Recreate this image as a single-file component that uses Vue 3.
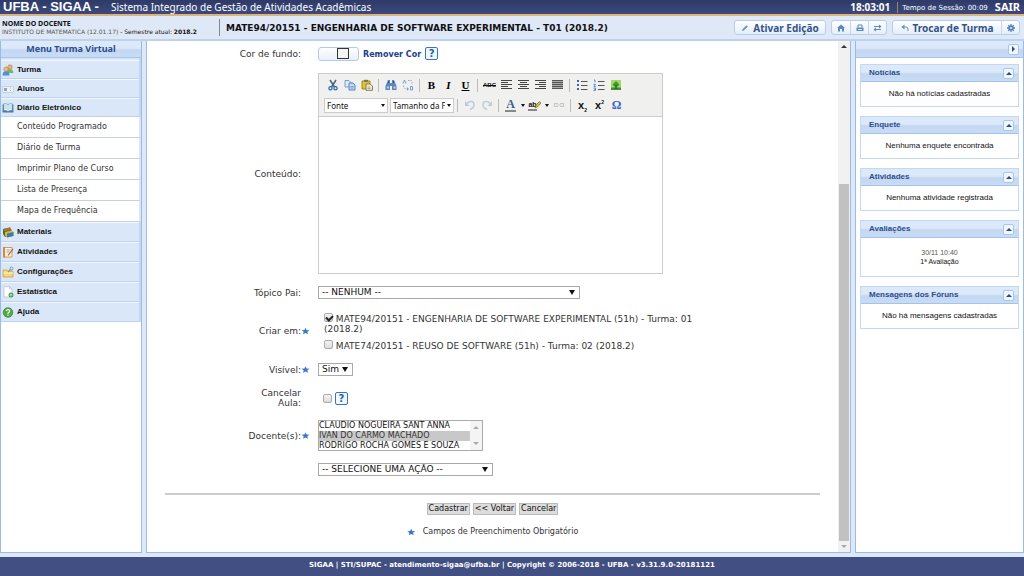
<script setup>
import { ref } from 'vue'

const mainItems = ['Turma', 'Alunos', 'Diário Eletrônico']
const subItems = ['Conteúdo Programado', 'Diário de Turma', 'Imprimir Plano de Curso', 'Lista de Presença', 'Mapa de Frequência']
const moreItems = ['Materiais', 'Atividades', 'Configurações', 'Estatística', 'Ajuda']
const cards = [
  { title: 'Notícias', text: 'Não há notícias cadastradas' },
  { title: 'Enquete', text: 'Nenhuma enquete encontrada' },
  { title: 'Atividades', text: 'Nenhuma atividade registrada' },
  { title: 'Avaliações', date: '30/11 10:40', text: '1ª Avaliação' },
  { title: 'Mensagens dos Fóruns', text: 'Não há mensagens cadastradas' }
]
const teachers = ['CLAUDIO NOGUEIRA SANT ANNA', 'IVAN DO CARMO MACHADO', 'RODRIGO ROCHA GOMES E SOUZA']
const chosen = ref(['IVAN DO CARMO MACHADO'])
const inT01 = ref(true)
const inT02 = ref(false)
const cancelled = ref(false)
const content = ref('')
</script>

<template>
  <div class="page">
    <header class="top">
      <strong class="brand">UFBA - SIGAA -</strong>
      <span class="system">Sistema Integrado de Gestão de Atividades Acadêmicas</span>
      <span class="clock">18:03:01</span>
      <span class="session">Tempo de Sessão: 00:09</span>
      <a class="exit" href="#">SAIR</a>
    </header>

    <div class="info">
      <div class="who">
        <strong>NOME DO DOCENTE</strong>
        <span class="dept">INSTITUTO DE MATEMATICA (12.01.17) <span class="sem">- Semestre atual: <b>2018.2</b></span></span>
      </div>
      <h1>MATE94/20151 - ENGENHARIA DE SOFTWARE EXPERIMENTAL - T01 (2018.2)</h1>
      <div class="actions">
        <button class="act edit" type="button">
          <svg width="8" height="8" viewBox="0 0 8 8"><path d="M1 7l.6-1.9L5.6 1.2 6.8 2.4 2.9 6.4z" fill="#6f8fb8" /></svg>
          Ativar Edição
        </button>
        <div class="group">
          <button class="act" type="button" aria-label="Início">
            <svg width="8" height="8" viewBox="0 0 8 8"><path d="M0 4l4-3.500L8 4H7v3.500H5V5H3v2.500H1V4z" fill="#5c88bd" /></svg>
          </button>
          <button class="act" type="button" aria-label="Imprimir">
            <svg width="8" height="8" viewBox="0 0 8 8"><path d="M2 3.500V1h4v2.500" fill="none" stroke="#5c88bd" /><path d="M.5 3.500h7V7h-7z" fill="#5c88bd" /><path d="M2 5h4v1H2z" fill="#dce9f8" /></svg>
          </button>
          <button class="act" type="button" aria-label="Alternar">
            <svg width="9" height="8" viewBox="0 0 9 8"><path d="M1 2.500h5M3 5.500h5" stroke="#5c88bd" /><path d="M6 .5l2.500 2L6 4.500zM3 3.500L.5 5.500l2.500 2z" fill="#5c88bd" /></svg>
          </button>
        </div>
        <div class="group">
          <button class="act switch" type="button">
            <svg width="8" height="8" viewBox="0 0 8 8"><path d="M1.500 3h3.500q2 0 2 2v2" fill="none" stroke="#6f8fb8" /><path d="M3.500.5v5L.3 3z" fill="#6f8fb8" /></svg>
            Trocar de Turma
          </button>
          <button class="act gear" type="button" aria-label="Configurar">
            <svg width="8" height="8" viewBox="0 0 8 8"><path d="M4 0v8M0 4h8M1.200 1.200l5.600 5.600M6.800 1.200L1.200 6.800" stroke="#4f7fba" stroke-width="1.300" /><circle cx="4" cy="4" r="2.500" fill="#4f7fba" /><circle cx="4" cy="4" r="1" fill="#e8f1fb" /></svg>
          </button>
        </div>
      </div>
    </div>

    <div class="body">
      <nav class="panel left">
        <h2 class="bar menu-title">Menu Turma Virtual</h2>
        <div class="items first">
          <a v-for="(m, i) in mainItems" :key="m" href="#" class="item">
            <svg v-if="i === 0" width="12" height="12" viewBox="0 0 12 12"><circle cx="8" cy="3" r="2.200" fill="#e8b878" stroke="#b07a30" stroke-width=".6" /><path d="M5 9q0-4 3-4t3.500 4z" fill="#74b860" /><circle cx="4" cy="5.200" r="2.200" fill="#f0c080" stroke="#c06a30" stroke-width=".6" /><path d="M.5 11.500q0-4.300 3.500-4.300t3.500 4.300z" fill="#4f8ddd" /></svg>
            <svg v-else-if="i === 1" width="12" height="12" viewBox="0 0 12 12"><path d="M.5 3.500h11v6H.5z" fill="#eef3f8" stroke="#c6d2e0" /><path d="M2 5h3v3H2z" fill="#8fa3bd" /><path d="M8 5h1M8 7.500h1" stroke="#9ab" /></svg>
            <svg v-else width="12" height="12" viewBox="0 0 12 12"><path d="M.6 2.500h10.800v8H.6z" fill="#3c78a8" /><path d="M1.800 1.800q2.200-.6 4.200.7 2-1.300 4.200-.7v7q-2.200-.6-4.200.7-2-1.300-4.200-.7z" fill="#eef6fb" stroke="#4b7fa8" stroke-width=".6" /><path d="M6 2.500v7M3 4h2M3 6h2M7 4h2M7 6h2" stroke="#8fb4cc" stroke-width=".7" /></svg>
            {{ m }}
          </a>
        </div>
        <div class="subs">
          <a v-for="s in subItems" :key="s" href="#" class="sub">{{ s }}</a>
        </div>
        <div class="items more">
          <a v-for="(m, i) in moreItems" :key="m" href="#" class="item">
            <svg v-if="i === 0" width="12" height="12" viewBox="0 0 12 12"><path d="M1 3l7-1.500L9.500 4v5L3 11 1 8z" fill="#45702f" /><path d="M1 3l7-1.500L9.500 4 3 5.500z" fill="#a8743a" /><path d="M3 6l7-1.500 1.500 1.500v4L5 11.500l-2-2z" fill="#e5b52e" /><path d="M5 7.500l6.500-1.500v4L5 11.500z" fill="#387dab" /></svg>
            <svg v-else-if="i === 1" width="12" height="12" viewBox="0 0 12 12"><path d="M1.500 1.500h8.500v9.500H1.500z" fill="#fff2dc" stroke="#e09a50" /><path d="M1 1v10.500h2V1z" fill="#d98542" /><path d="M4.500 4h4M4.500 6h3" stroke="#8aa4cc" /><path d="M6 9.500L11 3" stroke="#9a6334" stroke-width="1.200" /></svg>
            <svg v-else-if="i === 2" width="12" height="12" viewBox="0 0 12 12"><path d="M1 4h4l1 1.200h5V11H1z" fill="#f5d67d" stroke="#cf9d3b" stroke-width=".8" /><path d="M1.500 7h9.500" stroke="#fff1bb" /><path d="M6 6l3-3" stroke="#8c9aa8" stroke-width="1.500" /><circle cx="9.500" cy="2.500" r="1.500" fill="none" stroke="#8c9aa8" /></svg>
            <svg v-else-if="i === 3" width="12" height="12" viewBox="0 0 12 12"><path d="M2 .7h5.500L10 3v8H2z" fill="#fff" stroke="#b9c7d6" stroke-width=".8" /><path d="M7.500.7V3H10" fill="none" stroke="#b9c7d6" stroke-width=".8" /><circle cx="9" cy="9" r="2.500" fill="#4fa055" /><path d="M9 7.700v2.600M7.700 9h2.600" stroke="#d5f0d0" stroke-width=".8" /></svg>
            <svg v-else width="12" height="12" viewBox="0 0 12 12"><circle cx="6" cy="6.500" r="4.800" fill="#4dab3f" stroke="#34822b" stroke-width=".7" /><path d="M4.300 5.200Q4.500 3.700 6 3.700t1.700 1.400Q7.700 6 6 7v.8M6 8.600v1.200" fill="none" stroke="#fff" stroke-width="1.200" /></svg>
            {{ m }}
          </a>
        </div>
      </nav>

      <main class="panel center">
        <form class="form" @submit.prevent>
          <div class="row">
            <label class="lab" for="cor">Cor de fundo:<i class="star" /></label>
            <div class="field color-row">
              <button id="cor" class="swatch" type="button" aria-label="Cor de fundo"><span /></button>
              <a class="remove" href="#">Remover Cor</a>
              <button class="help" type="button">?</button>
            </div>
          </div>

          <div class="row">
            <label class="lab" for="conteudo">Conteúdo:<i class="star" /></label>
            <div class="field editor">
              <div class="tools">
                <div class="tool-row">
                  <button class="tool" type="button" aria-label="Recortar"><svg width="12" height="12" viewBox="0 0 12 12"><path d="M3 1l4.500 7M9 1L4.500 8" stroke="#49647f" stroke-width="1.500" /><circle cx="3.500" cy="9.300" r="1.600" fill="none" stroke="#2f6fb8" stroke-width="1.300" /><circle cx="8.500" cy="9.300" r="1.600" fill="none" stroke="#2f6fb8" stroke-width="1.300" /></svg></button>
                  <button class="tool" type="button" aria-label="Copiar"><svg width="12" height="12" viewBox="0 0 12 12"><path d="M1 1.500h4l2 2V8H1z" fill="#dcebfb" stroke="#7a9dd0" /><path d="M5 4h4l2 2v5H5z" fill="#c4dcf7" stroke="#5680c0" /><path d="M6.500 7.500h3M6.500 9h3" stroke="#7a9dd0" /></svg></button>
                  <button class="tool" type="button" aria-label="Colar"><svg width="12" height="12" viewBox="0 0 12 12"><path d="M1 2h8v8H1z" fill="#dfc32f" stroke="#a18a25" /><path d="M3 .8h4v2H3z" fill="#77705a" /><path d="M5 5h4l2.500 2v4.300H5z" fill="#f3f0d6" stroke="#77704a" stroke-width=".9" /><path d="M6.500 8h3M6.500 9.500h3" stroke="#887" stroke-width=".7" /></svg></button>
                  <i class="sep" />
                  <button class="tool" type="button" aria-label="Localizar"><svg width="12" height="12" viewBox="0 0 12 12"><path d="M3 1h2v3h2V1h2l2.500 6v4H7V7H5v4H.5V7z" fill="#5d86c0" /><path d="M2 7.500h2v2H2zM8.500 7.500h2v2h-2z" fill="#b9d1ee" /><path d="M3.500 2v2M8.500 2v2" stroke="#2e4e86" /></svg></button>
                  <button class="tool" type="button" aria-label="Substituir"><svg width="12" height="12" viewBox="0 0 12 12"><path d="M6 1.500h3q1 0 1 1.500v2M1.500 6.500Q1.500 10 5 10" fill="none" stroke="#8ca8d2" stroke-dasharray="1.500 1" /><path d="M5 8l2 2-2 1.800z" fill="#7b9bd0" /><path d="M1 4.500L2.500 1 4 4.500M8.500 7.500h2v3.500h-2z" fill="none" stroke="#7b9bd0" /></svg></button>
                  <i class="sep" />
                  <button class="tool glyph" type="button"><b>B</b></button>
                  <button class="tool glyph" type="button"><b><em>I</em></b></button>
                  <button class="tool glyph" type="button"><b><u>U</u></b></button>
                  <i class="sep" />
                  <button class="tool strike" type="button"><s>ABC</s></button>
                  <button class="tool" type="button" aria-label="Alinhar à esquerda"><svg width="11" height="10" viewBox="0 0 11 10"><path d="M0 .5h11M0 2.500h7M0 4.500h11M0 6.500h7M0 8.500h11" stroke="#444" /></svg></button>
                  <button class="tool" type="button" aria-label="Centralizar"><svg width="11" height="10" viewBox="0 0 11 10"><path d="M0 .5h11M2 2.500h7M0 4.500h11M2 6.500h7M0 8.500h11" stroke="#444" /></svg></button>
                  <button class="tool" type="button" aria-label="Alinhar à direita"><svg width="11" height="10" viewBox="0 0 11 10"><path d="M0 .5h11M4 2.500h7M0 4.500h11M4 6.500h7M0 8.500h11" stroke="#444" /></svg></button>
                  <button class="tool" type="button" aria-label="Justificar"><svg width="11" height="10" viewBox="0 0 11 10"><path d="M0 0h11v9H0z" fill="#aaa" /><path d="M0 .5h11M0 2.500h11M0 4.500h11M0 6.500h11M0 8.500h11" stroke="#555" /></svg></button>
                  <i class="sep" />
                  <button class="tool" type="button" aria-label="Lista"><svg width="12" height="12" viewBox="0 0 12 12"><path d="M1 1h2v2H1zM1 5h2v2H1zM1 9h2v2H1z" fill="#3f62a8" /><path d="M5 2.500h6.500M5 6.500h6.500M5 10.500h6.500" stroke="#555" /></svg></button>
                  <button class="tool" type="button" aria-label="Lista numerada"><svg width="12" height="12" viewBox="0 0 12 12"><path d="M1 1h1v2.500M.5 5.500h2L1 7.500h1.800M.5 9h2v2.500h-2M1 10.200h1.500" fill="none" stroke="#4a86cf" stroke-width=".9" /><path d="M5 2.500h6.500M5 6.500h6.500M5 10.500h6.500" stroke="#555" /></svg></button>
                  <button class="tool" type="button" aria-label="Imagem"><svg width="12" height="12" viewBox="0 0 12 12"><path d="M1 1h10v10H1z" fill="#a5d865" /><path d="M1 8.500h10V11H1z" fill="#3f8f35" /><path d="M6 2L2.500 5.500 4 7.500h4l1.500-2z" fill="#35a02c" /><path d="M5.300 6h1.400v4H5.300z" fill="#5b4a2a" /></svg></button>
                </div>
                <div class="tool-row">
                  <span class="drop combo"><select aria-label="Fonte"><option>Fonte</option></select><i class="caret" /></span>
                  <span class="drop combo second"><select aria-label="Tamanho da Fonte"><option>Tamanho da Fonte</option></select><i class="caret" /></span>
                  <i class="sep" />
                  <button class="tool" type="button" aria-label="Desfazer"><svg width="12" height="12" viewBox="0 0 12 12"><path d="M2.500 5Q4 2.500 7 2.500t3 3.500Q10 9 6 10.500" fill="none" stroke="#bccadf" stroke-width="1.500" /><path d="M1 2v5h4.500z" fill="#bccadf" /></svg></button>
                  <button class="tool" type="button" aria-label="Refazer"><svg width="12" height="12" viewBox="0 0 12 12"><path d="M9.500 5Q8 2.500 5 2.500T2 6q0 3 4 4.500" fill="none" stroke="#bccfd9" stroke-width="1.500" /><path d="M11 2v5H6.500z" fill="#bccfd9" /></svg></button>
                  <i class="sep" />
                  <button class="tool letter" type="button"><b>A</b></button>
                  <button class="arrow" type="button" aria-label="Cor do texto"><i class="caret" /></button>
                  <button class="tool marker" type="button"><b>ab</b><svg width="7" height="8" viewBox="0 0 7 8"><path d="M1 7l1-3 3.500-3.500L7 2 3.800 5.700z" fill="#ddb83a" stroke="#776a32" stroke-width=".7" /></svg></button>
                  <button class="arrow" type="button" aria-label="Cor de realce"><i class="caret" /></button>
                  <button class="tool" type="button" aria-label="Link"><svg width="12" height="12" viewBox="0 0 12 12"><path d="M5 4.500H1.500v3H5M7 4.500h3.500v3H7M3.500 6h5" fill="none" stroke="#c5c9ce" stroke-width="1.200" /></svg></button>
                  <i class="sep" />
                  <button class="tool script" type="button"><b>x<sub>2</sub></b></button>
                  <button class="tool script" type="button"><b>x<sup>2</sup></b></button>
                  <button class="tool omega" type="button"><b>Ω</b></button>
                </div>
              </div>
              <textarea id="conteudo" v-model="content" />
            </div>
          </div>

          <div class="row">
            <label class="lab" for="topico">Tópico Pai:<i class="star" /></label>
            <span class="drop topic"><select id="topico"><option>-- NENHUM --</option></select><i class="caret big" /></span>
          </div>

          <div class="row">
            <span class="lab">Criar em:<i class="star on" /></span>
            <div class="field checks">
              <label><input v-model="inT01" type="checkbox"> MATE94/20151 - ENGENHARIA DE SOFTWARE EXPERIMENTAL (51h) - Turma: 01 (2018.2)</label>
              <label><input v-model="inT02" type="checkbox"> MATE74/20151 - REUSO DE SOFTWARE (51h) - Turma: 02 (2018.2)</label>
            </div>
          </div>

          <div class="row">
            <label class="lab" for="visivel">Visível:<i class="star on" /></label>
            <span class="drop visible"><select id="visivel"><option>Sim</option></select><i class="caret big" /></span>
          </div>

          <div class="row">
            <label class="lab" for="cancelar"><span>Cancelar<br>Aula:</span><i class="star" /></label>
            <div class="field cancel">
              <input id="cancelar" v-model="cancelled" type="checkbox">
              <button class="help" type="button">?</button>
            </div>
          </div>

          <div class="row">
            <label class="lab" for="docentes">Docente(s):<i class="star on" /></label>
            <div class="field listbox">
              <select id="docentes" v-model="chosen" multiple size="3">
                <option v-for="t in teachers" :key="t">{{ t }}</option>
              </select>
              <span class="list-scroll"><i class="tri up pale" /><i class="tri down pale" /></span>
            </div>
          </div>

          <div class="row">
            <span />
            <span class="drop action"><select aria-label="Ação"><option>-- SELECIONE UMA AÇÃO --</option></select><i class="caret big" /></span>
          </div>

          <hr>
          <div class="buttons">
            <button type="submit">Cadastrar</button>
            <button type="button">&lt;&lt; Voltar</button>
            <button type="button">Cancelar</button>
          </div>
          <p class="required"><i class="star on" /> Campos de Preenchimento Obrigatório</p>
        </form>
        <div class="scroll">
          <i class="tri up" />
          <span class="track"><span class="thumb" /></span>
          <i class="tri down pale" />
        </div>
      </main>

      <aside class="panel right">
        <div class="bar right-bar"><button class="toggle" type="button" aria-label="Recolher"><i class="tri side" /></button></div>
        <div class="cards">
          <section v-for="c in cards" :key="c.title" class="card" :class="{ tall: c.date }">
            <header class="bar">
              <h3>{{ c.title }}</h3>
              <button class="toggle" type="button" aria-label="Recolher"><i class="tri up" /></button>
            </header>
            <div class="card-body">
              <time v-if="c.date">{{ c.date }}</time>
              <span>{{ c.text }}</span>
            </div>
          </section>
        </div>
      </aside>
    </div>

    <footer class="foot">SIGAA | STI/SUPAC - atendimento-sigaa@ufba.br | Copyright © 2006-2018 - UFBA - v3.31.9.0-20181121</footer>
  </div>
</template>

<style>
body { background: #dfe8f6; }
</style>

<style scoped>
* { box-sizing: border-box; }
.page {
  display: flex;
  flex-direction: column;
  min-height: 100vh;
  font: 8px/10px "DejaVu Sans", sans-serif;
  color: #333;
  background: #dfe8f6;
}
a { color: inherit; text-decoration: none; }
button, select, input, textarea { font: inherit; color: inherit; margin: 0; padding: 0; }
button { border: 0; background: none; }
svg { display: block; flex: none; }
h1, h2, h3, p { margin: 0; }

.top {
  display: flex;
  align-items: center;
  height: 16px;
  padding: 0 4px 0 3px;
  background: linear-gradient(#2e3a68, #3b4a7c);
  border-bottom: 2px solid #e0b27c;
  color: #fff;
}
.brand { font: bold 13px/14px "Liberation Sans", sans-serif; width: 108px; }
.system { flex: 1; font: 10px/14px "Noto Sans", sans-serif; }
.clock { font: bold 10px/14px "Noto Sans", sans-serif; margin-right: 7px; }
.session { font-size: 7px; border-left: 1px solid #a9855e; padding-left: 4px; margin-right: 7px; padding-top: 1px; }
.exit { font: bold 11px/14px "Noto Sans", sans-serif; }

.info {
  display: flex;
  align-items: center;
  height: 25px;
  padding-right: 4px;
  border-bottom: 2px solid #bfd2ec;
}
.who { width: 220px; padding-left: 2px; border-right: 1px solid #888; display: flex; flex-direction: column; justify-content: center; height: 17px; color: #111; }
.who strong { font: bold 7px/8px "Noto Sans", sans-serif; }
.dept { font-size: 6px; line-height: 7px; color: #555; white-space: nowrap; }
.sem { color: #111; }
h1 { flex: 1; font-size: 9px; line-height: 12px; padding-left: 6px; color: #111; white-space: nowrap; }
.actions { display: flex; gap: 5px; }
.act { display: flex; align-items: center; justify-content: center; gap: 4px; height: 13px; width: 18px; font: bold 10px/12px "Noto Sans", sans-serif; color: #35548a; }
.act + .act { border-left: 1px solid #c5d8ef; }
.act.edit, .group { border: 1px solid #b9cfe9; border-radius: 3px; background: linear-gradient(#fff, #e3eefb); height: 15px; }
.act.edit { width: 92px; }
.group { display: flex; }
.act.switch { width: 108px; }

.body { flex: 1; display: flex; gap: 4px; padding-bottom: 4px; }
.panel { background: #fff; border: 1px solid #99bbe8; border-top: 0; }
.left { width: 142px; }
.center { flex: 1; display: flex; }
.right { width: 169px; }
.bar { display: flex; align-items: center; height: 17px; background: linear-gradient(#dce9fa 0 45%, #c3d7f2 55%, #c9dcf5); border-bottom: 1px solid #a5c3e8; }
.menu-title { justify-content: center; font: bold 9px/12px "Noto Sans", sans-serif; color: #2b4c8c; }
.items { display: flex; flex-direction: column; background: #d9e7f8; border-right: 2px solid #c5d8f0; }
.item { display: flex; align-items: center; gap: 3px; height: 20px; padding-left: 1px; border-top: 1px solid #f4f8fd; border-bottom: 1px solid #bdd2ee; font: bold 8px/10px "Liberation Sans", sans-serif; color: #111; }
.first .item { height: 19px; }
.first { padding-top: 2px; }
.sub { display: flex; align-items: center; height: 21px; padding-left: 16px; border-bottom: 1px solid #c8d0d8; border-right: 2px solid #d9e7f8; }

.form { flex: 1; padding: 5px 18px 0; display: flex; flex-direction: column; gap: 12px; }
.row { display: grid; grid-template-columns: 145px 1fr; column-gap: 8px; align-items: center; }
.row:first-child { height: 15px; }
.lab { display: flex; align-items: center; justify-content: flex-end; text-align: right; font-size: 9px; }
.star { flex: none; width: 9px; height: 8px; }
.star.on { background: #3f78c8; clip-path: polygon(50% 10%, 62% 38%, 95% 40%, 70% 60%, 78% 92%, 50% 74%, 22% 92%, 30% 60%, 5% 40%, 38% 38%); }
.color-row { display: flex; align-items: center; }
.swatch { display: flex; align-items: center; width: 41px; height: 14px; padding-left: 18px; border: 1px solid #b5cae3; border-radius: 3px; background: linear-gradient(#fff, #e7f0fb); }
.swatch span { width: 12px; height: 11px; border: 1px solid #333; background: #f4f4f4; }
.remove { font-weight: bold; color: #22408a; margin: 3px 4px 0 4px; }
.help { width: 13px; height: 13px; border: 1px solid #3a74bd; border-radius: 2px; background: #f2f8ff; color: #2362b0; font: bold 10px/11px "DejaVu Sans", sans-serif; text-align: center; }

.editor { width: 345px; max-width: 100%; border: 1px solid #ccc; display: flex; flex-direction: column; }
.tools { background: #f0f0ee; border-bottom: 1px solid #ccc; height: 43px; padding: 1px 5px; }
.tool-row { display: flex; align-items: center; height: 20px; }
.tool { display: flex; align-items: center; justify-content: center; width: 17px; height: 16px; }
.sep { width: 1px; height: 13px; background: #bbb; margin: 0 3px; }
.glyph { font: 11px/14px "Liberation Serif", serif; color: #000; }
.strike { font: bold 6px/10px "Liberation Sans", sans-serif; color: #111; }
.letter { font: 12px/11px "Liberation Serif", serif; color: #39608f; }
.letter b { border-bottom: 2px solid #888; padding: 0 1px; }
.marker { font: 7px/9px "Liberation Sans", sans-serif; color: #111; }
.marker b { border-bottom: 2px solid #888; }
.marker svg { margin-left: -3px; }
.arrow { width: 7px; display: flex; justify-content: center; }
.script { font: 11px/12px "Liberation Sans", sans-serif; color: #111; }
.script sub, .script sup { font-size: 5px; line-height: 0; }
.omega { font: 12px/12px "Liberation Serif", serif; color: #3566c8; }
.editor textarea { display: block; width: 100%; height: 156px; border: 0; resize: none; outline: 0; }

.drop { display: flex; position: relative; height: 13px; border: 1px solid #a9a9a9; background: #fff; }
.drop select { flex: 1; width: 100%; appearance: none; border: 0; background: none; padding-left: 3px; color: #111; outline: 0; font-size: 9px; line-height: 11px; }
.caret { border: 2px solid transparent; border-top: 3px solid #111; border-bottom: 0; }
.drop .caret { position: absolute; right: 2px; top: 50%; margin-top: -1px; }
.drop .caret.big { border-width: 5px 3px 0; margin-top: -3px; right: 4px; }
.drop.combo { width: 64px; height: 15px; border-color: #ccc; }
.drop.combo select { font: 8px/13px "Noto Sans", sans-serif; padding-right: 8px; padding-left: 2px; }
.second { margin-left: 2px; }
.topic { width: 262px; }
.visible { width: 35px; }
.action { width: 175px; }

input[type="checkbox"] { appearance: none; width: 9px; height: 9px; border: 1px solid #aaa; border-radius: 2px; background: linear-gradient(#f2f2f2, #ddd); display: inline-block; }
input[type="checkbox"]:checked::after { content: ""; display: block; width: 5px; height: 3px; margin: 1px 0 0 1px; border: solid #222; border-width: 0 0 2px 2px; transform: rotate(-45deg); }
.checks { width: 384px; max-width: 100%; height: 40px; display: flex; flex-direction: column; justify-content: space-between; padding: 2px 0 0 6px; font-size: 9px; }
.checks label { line-height: 10px; }
.cancel { display: flex; align-items: center; gap: 3px; padding-left: 5px; height: 20px; }
.listbox { display: flex; width: 165px; height: 31px; border: 1px solid #aaa; }
.listbox select { flex: 1; min-width: 0; height: 29px; border: 0; overflow: hidden; outline: 0; color: #111; }
.listbox option { padding: 0; min-height: 0; line-height: 10px; height: 10px; }
.listbox option:checked { background: #c8c8c8 linear-gradient(#c8c8c8, #c8c8c8); color: #333; }
.list-scroll { width: 12px; background: #f4f4f4; display: flex; flex-direction: column; justify-content: space-between; align-items: center; padding: 5px 0; }

hr { width: 100%; height: 2px; border: 0; margin: 5px 0 0; background: #ccc; }
.buttons { display: flex; justify-content: center; gap: 3px; margin-top: -4px; }
.buttons button { height: 12px; padding: 0 1px; border: 1px solid #bbb; background: #ddd; color: #111; }
.required { display: flex; justify-content: center; align-items: center; gap: 7px; }

.scroll { width: 12px; display: flex; flex-direction: column; align-items: center; background: #f1f1f1; padding: 4px 0; gap: 4px; }
.track { flex: 1; align-self: stretch; display: flex; flex-direction: column; justify-content: flex-end; padding: 0 1px; }
.thumb { height: 73%; background: #c1c1c1; }
.tri { border: 3px solid transparent; width: 0; height: 0; flex: none; }
.tri.up { border-top: 0; border-bottom-color: #333; }
.tri.down { border-bottom: 0; border-top-color: #333; }
.tri.side { border-right: 0; border-left-color: #2b4c8c; }
.tri.up.pale { border-bottom-color: #aaa; }
.tri.down.pale { border-top-color: #aaa; }

.right-bar { justify-content: flex-end; padding-right: 4px; }
.toggle { display: flex; align-items: center; justify-content: center; width: 11px; height: 11px; border: 1px solid #a9c5e9; border-radius: 2px; background: #f1f7fe; }
.toggle .tri.up { border-bottom-color: #2b4c8c; }
.cards { display: flex; flex-direction: column; gap: 9px; padding: 6px 4px; }
.card { height: 43px; display: flex; flex-direction: column; border: 1px solid #c3d8f2; }
.card.tall { height: 57px; }
.card .bar { justify-content: space-between; padding: 0 4px 0 8px; }
h3 { font: bold 8px/10px "Liberation Sans", sans-serif; color: #2b4c8c; }
.card-body { flex: 1; display: flex; flex-direction: column; align-items: center; justify-content: center; font: 8px/10px "Liberation Sans", sans-serif; color: #111; }
.tall .card-body { font-size: 7px; line-height: 9px; }
time { color: #555; }

.foot { height: 19px; padding-top: 3px; background: #414f82; color: #fff; text-align: center; font-size: 7px; font-weight: bold; }
</style>
